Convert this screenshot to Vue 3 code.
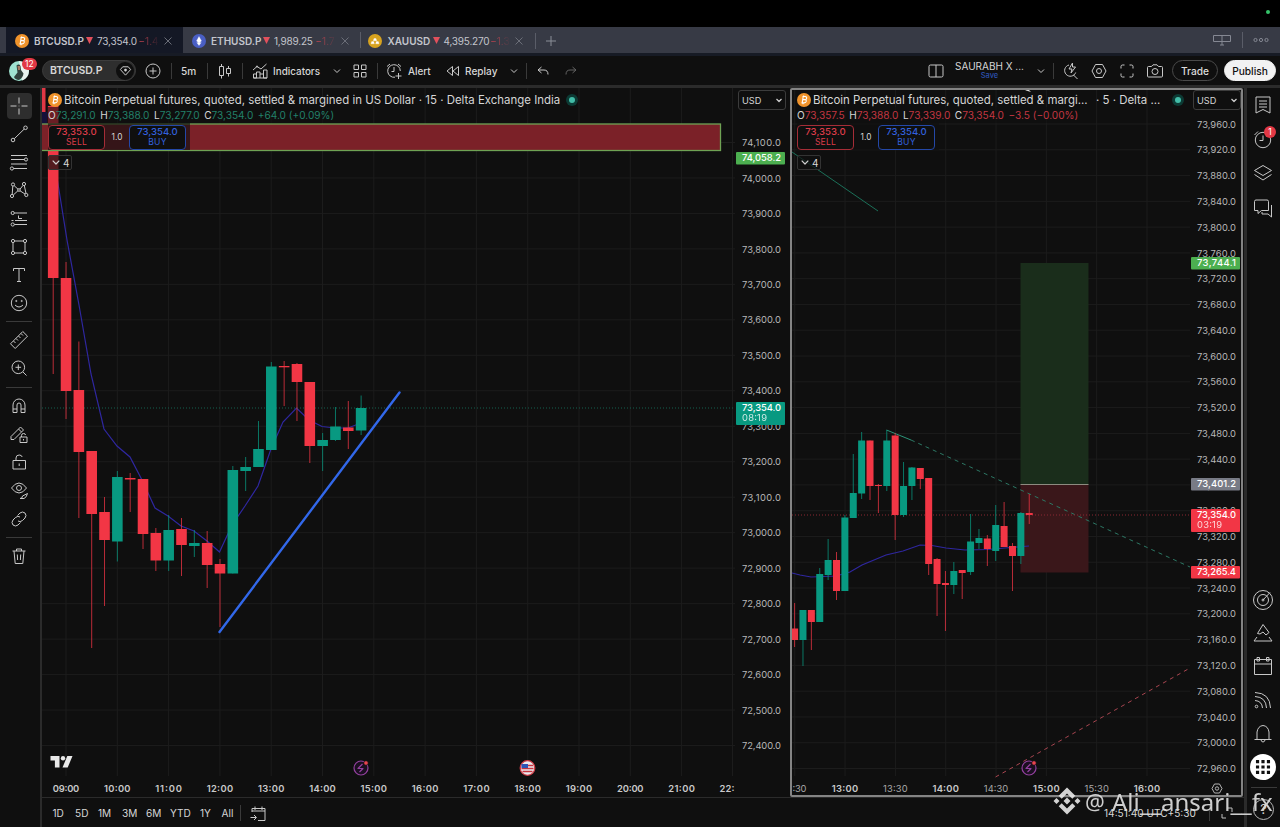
<template>
  <div class="app">
    <div class="menubar"><i class="camera-dot"></i></div>

    <nav class="tabs">
      <div v-for="t in tabs" :key="t.name" class="tab" :class="t.cls">
        <CoinIcon :kind="t.cls" />
        <b>{{ t.name }}</b>
        <svg class="tri" viewBox="0 0 7 7"><path d="M0 0h7L3.5 7z" /></svg>
        <span class="tab-price">{{ t.price }}</span>
        <span class="tab-change">{{ t.change }}</span>
        <svg class="close" viewBox="0 0 8 8"><path d="M.5 .5l7 7M7.5 .5l-7 7" /></svg>
      </div>
      <svg class="new-tab" viewBox="0 0 10 10"><path d="M5 0v10M0 5h10" /></svg>
      <div class="window-tools">
        <svg width="18" height="12" viewBox="0 0 18 12"><path d="M.5 1.5h17v6H.5zM9 1.5v9.5M7 11h4" /></svg>
        <i></i>
        <svg width="16" height="6" viewBox="0 0 16 6"><path :d="c(2.5, 3, 1.6) + c(8, 3, 1.6) + c(13.5, 3, 1.6)" /></svg>
      </div>
    </nav>

    <header class="toolbar">
      <div class="avatar">
        <svg viewBox="0 0 22 22">
          <circle cx="11" cy="11" r="10" fill="#9fe3d0" />
          <path d="M11 1a10 10 0 0 1 3 19.5L12 8z" fill="#e8f4ef" />
          <path d="M8.500 5.500q2.500-2 4 .5l.5 4 2.500 3.500q-.5 4-4.500 6.500-4-.5-5-3l3.500-4.500z" fill="#31423c" />
          <path d="M9.500 6h2.500v4h-2z" fill="#a87a62" />
        </svg>
        <span>12</span>
      </div>
      <div class="symbol">
        BTCUSD.P
        <i><svg viewBox="0 0 14 14"><path d="M4 3h6l2.500 3L7 12 1.500 6z" /><path d="M7 5v3M5.500 6.500h3" stroke-width="1.500" /></svg></i>
      </div>
      <Icon name="plus" class="ml6" />
      <i class="sep ml7"></i>
      <span class="txt interval">5m</span>
      <i class="sep ml9"></i>
      <Icon name="candles" class="ml6" />
      <i class="sep ml6"></i>
      <Icon name="indicators" class="ml6" />
      <span class="txt indicators">Indicators</span>
      <Icon name="chev" class="chev ml5" />
      <Icon name="grid" class="ml1" />
      <i class="sep ml6"></i>
      <Icon name="alert" class="ml5" />
      <span class="txt alert">Alert</span>
      <Icon name="replay" class="ml11" />
      <span class="txt replay">Replay</span>
      <Icon name="chev" class="chev ml5" />
      <i class="sep ml1"></i>
      <Icon name="undo" class="ml5" />
      <Icon name="redo" class="ml6 dim" />

      <div class="toolbar-right">
        <Icon name="layout" />
        <div class="layout-name">
          <span>SAURABH X ...</span>
          <small>Save</small>
        </div>
        <Icon name="chev" class="chev ml5" />
        <i class="sep ml1"></i>
        <Icon name="quick" class="ml6" />
        <Icon name="settings" class="ml6" />
        <Icon name="full" class="ml6" />
        <Icon name="camera" class="ml6" />
        <button class="trade">Trade</button>
        <button class="publish">Publish</button>
      </div>
    </header>

    <div class="body">
      <aside class="tools">
        <template v-for="(name, i) in drawTools" :key="i">
          <hr v-if="name === '-'" />
          <div v-else class="tool" :class="{ active: name === 'cross' }"><Icon :name="name" /></div>
        </template>
      </aside>

      <main>
        <div class="charts">
          <section v-for="p in panes" :key="p.id" class="pane" :class="p.id">
            <svg class="canvas" :viewBox="p.box">
              <g class="gridlines">
                <line v-for="l in p.prices" :key="l.text" :x1="p.x0" :x2="p.x1" :y1="l.y" :y2="l.y" />
                <line v-for="l in p.times" :key="l.text" :x1="l.x" :x2="l.x" y1="88" y2="776" />
              </g>

              <g v-if="p.id === 'left'">
                <rect x="42" y="88" width="3.500" height="24" fill="#e03745" />
                <rect x="42" y="112" width="5" height="12" fill="#15103a" />
              </g>
              <g v-else>
                <rect x="1020.500" y="263" width="68" height="221.500" fill="#1a2d1b" />
                <rect x="1020.500" y="484.500" width="68" height="88" fill="#3a171a" />
                <line x1="1020.500" x2="1088.500" y1="484.500" y2="484.500" stroke="#8d8b80" />
                <path d="M792 152l86 59" stroke="#1c7059" />
                <path d="M886.500 430l24.500 10" stroke="#2b9479" />
                <path d="M911 440l279 127" stroke="#2c7764" stroke-dasharray="4 4" />
                <path d="M995.500 777L1190 668" stroke="#a84550" stroke-dasharray="4 4" />
              </g>

              <polyline class="ma" :points="p.ma" />
              <line :x1="p.x0" :x2="p.x1" :y1="p.lastY" :y2="p.lastY" :stroke="p.lastColor" stroke-dasharray="1 2" />

              <g v-for="(k, i) in p.candles" :key="i" :fill="k[4] ? '#089981' : '#f23645'">
                <rect :x="p.first + i * p.step - 0.5" :y="k[0]" width="1" :height="k[3] - k[0]" opacity=".75" />
                <rect :x="p.first + i * p.step - p.body / 2" :y="k[1]" :width="p.body" :height="k[2] - k[1]" />
              </g>

              <g v-if="p.id === 'left'">
                <rect x="40" y="124" width="680.500" height="26.500" fill="#7b2128" stroke="#6fa254" stroke-width="1.300" />
                <path class="trend" d="M219.500 632L399.500 392.500" />
                <g fill="#e8e8e8">
                  <path d="M50.500 756h9v11.500h-4.600v-7h-4.400zM67.300 756h5.200l-4.800 11.500h-5.200z" />
                  <circle cx="63" cy="758.300" r="2.200" />
                </g>
                <g>
                  <circle cx="527.500" cy="768" r="7.300" fill="#e9e9ee" stroke="#cf3a44" stroke-width="1.300" />
                  <path d="M522 765.500h11M521.500 768.500h12M522.500 771.500h10" stroke="#c6343f" stroke-width="1.300" />
                  <path d="M521.500 764h6.500v4h-6.500z" fill="#2c55b5" />
                </g>
              </g>

              <g class="event" :transform="`translate(${p.eventX} 768)`">
                <circle r="7" />
                <path d="M1.500-4l-4.500 4.500h5L-1.500 4" />
                <circle cx="5" cy="-5" r="2.300" class="event-dot" />
              </g>

              <text v-for="l in p.prices" :key="l.text" class="price" :x="p.labelX" :y="l.y + 3.6" textLength="39">{{ l.text }}</text>
              <g v-for="t in p.tags" :key="t.text">
                <rect :x="p.labelX - 6" :y="t.y" width="49" :height="t.sub ? 23 : 12.5" rx="1" :fill="t.fill" />
                <text class="price tag" :x="p.labelX" :y="t.y + 9.3" textLength="39">{{ t.text }}</text>
                <text v-if="t.sub" class="price tag sub" :x="p.labelX" :y="t.y + 19.4" textLength="25">{{ t.sub }}</text>
              </g>
              <text
                v-for="l in p.times"
                :key="l.text"
                class="time"
                :class="{ minor: l.minor }"
                :x="l.tx || l.x"
                y="791.500"
                :textLength="l.w || 26.5"
              >{{ l.text }}</text>
              <path
                v-if="p.id === 'right'"
                :d="'M1214.500 784h5l2.500 4.500-2.500 4.500h-5l-2.500-4.500z' + c(1217, 788.5, 1.7)"
                stroke="#b5b5b5"
                fill="none"
              />
              <path v-if="p.id === 'right'" d="M1022 88l5 0 4 4-5-1.500z" fill="#ddd" />
            </svg>

            <div class="legend">
              <div class="title">
                <CoinIcon kind="btc" />
                <span class="name">{{ p.title }}</span>
                <span v-if="p.suffix" class="suffix">{{ p.suffix }}</span>
                <i class="status"></i>
              </div>
              <div class="ohlc">
                <span v-for="o in p.ohlc" :key="o[0]">{{ o[0] }}<em>{{ o[1] }}</em></span>
                <em>{{ p.change }}</em>
              </div>
              <div class="orders">
                <div class="order sell"><span>73,353.0</span><small>SELL</small></div>
                <span class="qty">1.0</span>
                <div class="order buy"><span>73,354.0</span><small>BUY</small></div>
              </div>
              <div class="collapse">
                <svg viewBox="0 0 8 5"><path d="M.7 .7L4 4 7.300 .7" /></svg>4
              </div>
            </div>
            <div class="currency">USD <svg viewBox="0 0 8 5"><path d="M1.500 1L4 3.500 6.500 1" /></svg></div>
          </section>
        </div>

        <footer>
          <span v-for="r in ranges" :key="r[0]" :style="{ width: r[1] + 'px' }">{{ r[0] }}</span>
          <i class="sep"></i>
          <Icon name="goto" class="ml6" />
          <span class="clock">14:51:40 UTC+5:30</span>
          <i class="sep"></i>
          <svg class="corner" viewBox="0 0 12 12"><path d="M1 7v4h4M7 1h4v4" /></svg>
        </footer>
      </main>

      <aside class="widgets">
        <div v-for="w in widgetsTop" :key="w" class="widget">
          <Icon :name="w" />
          <span v-if="w === 'clock'" class="count">1</span>
        </div>
        <div class="widgets-bottom">
          <div v-for="w in widgetsBottom" :key="w" class="widget" :class="w"><Icon :name="w" /></div>
          <hr />
          <div class="help">?</div>
        </div>
      </aside>
    </div>

    <div class="watermark">
      <svg viewBox="0 0 28 28">
        <path d="M14 .5l8.300 8.300-3 3L14 6.500l-5.300 5.300-3-3zM3.500 11l3 3-3 3-3-3zM24.500 11l3 3-3 3-3-3zM14 10.500l3.500 3.500-3.500 3.500-3.500-3.500zM5.700 19.200l3-3 5.300 5.300 5.300-5.300 3 3L14 27.500z" />
      </svg>
      <span class="at">@</span>
      <span>Ali__ansari__fx</span>
    </div>
  </div>
</template>

<script setup>
import { h } from "vue";

// circle as a path, so every icon can be a single d string
const c = (x, y, r) => `M${x - r} ${y}a${r} ${r} 0 1 0 ${2 * r} 0a${r} ${r} 0 1 0 ${-2 * r} 0`;

const icons = {
  plus: c(11, 11, 7) + "M11 7.5v7M7.5 11h7",
  candles: "M5.500 6.500h4v9h-4zM7.500 4v2.500M7.500 15.500v3M12.500 8.500h4v5h-4zM14.500 6v2.500M14.500 13.500v3",
  indicators: "M4.500 18v-4h3v4zM7.500 18v-6h3.500v6M11 14h3.500v4M14.500 18v-8H18v8zM4.500 18H18M4 10l4-3.500 4 2.500 5.500-5" + c(8, 6.5, 0.6),
  chev: "M8 9.500l3 3 3-3",
  grid: "M5 5h4.500v4.500H5zM12.500 5H17v4.500h-4.500zM5 12.500h4.500V17H5zM12.500 12.500H17V17h-4.500z",
  alert: "M12 17.200A6.300 6.300 0 1 1 17.300 11M11 7v4.500H8.500M4 6.500L7 4M15 4l3 2.500M15.500 13v6M12.500 16h6",
  replay: "M10.500 6.500v9L5 11zM16.500 6.500v9L11 11z",
  undo: "M9.500 7L6 10l3.500 3M6 10h6q4 0 4 4.500",
  redo: "M12.500 7L16 10l-3.500 3M16 10h-6q-4 0-4 4.500",
  layout: "M5.500 5h11q1.500 0 1.500 1.500v9q0 1.500-1.500 1.500h-11q-1.500 0-1.500-1.500v-9q0-1.500 1.500-1.500zM11 5v12",
  quick: "M9 5A5.700 5.700 0 1 0 15.700 12.500M13.500 15l4 4M12.500 3l-3.500 6h3l-1 4 4.500-6h-3z",
  settings: "M7.500 4.500h7L18 11l-3.500 6.500h-7L4 11z" + c(11, 11, 2.5),
  full: "M5 8.500V6.500Q5 5 6.500 5h2M13.500 5h2Q17 5 17 6.500v2M17 13.500v2q0 1.500-1.500 1.500h-2M8.500 17h-2Q5 17 5 15.500v-2",
  camera: "M3.500 7.500q0-1 1-1h3L9 4.800h4l1.500 1.700h3q1 0 1 1v8.500q0 1-1 1h-13q-1 0-1-1z" + c(11, 11.5, 3),
  cross: "M11 2.500v6M11 13.500v6M2.500 11h6M13.500 11h6M11 10.700v.6",
  trend: c(5, 17, 1.8) + c(17.5, 4.8, 1.8) + "M6.300 15.700L16.200 6.100",
  fib: "M3 4.500h16M3 8.500h13.500M3 13h16M5.500 17.500H19" + c(18, 8.5, 1.6) + c(3.9, 17.5, 1.6),
  pattern: c(5, 5.5, 1.6) + c(16, 5, 1.6) + c(4, 17, 1.6) + c(18.3, 16, 1.6) + c(11, 11, 1.3) + "M4.800 7.100L4.200 15.400M6.200 6.700L10 10.200M12 10.200L15 6.400M16.300 6.600L18 14.400M5.300 16L10 11.700M12 11.800L17 15",
  position: c(4.7, 6, 1.6) + c(4.7, 17.5, 1.6) + "M6.300 6H19M6.300 17.500H19M3.500 13.500h2M7 13.500h12M10.500 8.500v3h3.500",
  rect: c(5, 5, 1.6) + c(17, 5, 1.6) + c(5, 17, 1.6) + c(17, 17, 1.6) + "M6.600 5h8.800M6.600 17h8.800M5 6.600v8.800M17 6.600v8.800",
  text: "M5.500 7V4.500h11V7M11 4.500v13M9 17.500h4",
  smile: c(11, 11, 7.7) + c(8.3, 9, 0.6) + c(13.7, 9, 0.6) + "M7 13q4 4 8 0",
  ruler: "M2.500 14.800L14.800 2.500l4.700 4.700L7.200 19.500zM5.500 12l2 2M8 9.500l2 2M10.500 7l2 2M13 4.500l2 2",
  zoom: c(10.3, 10.3, 6.3) + "M10.300 7.500v5.600M7.500 10.300h5.600M15 15l3.500 3.500",
  magnet: "M5 17.500V10a6 6 0 0 1 12 0v7.500h-4V10a2 2 0 0 0-4 0v7.500zM5 14h4M13 14h4",
  pencil: "M3 13.500L12.500 4l3 3L6 16.500H3zM10.500 6l3 3M12 14h7v5.500h-7zM13.500 14v-1.500q0-2 2-2t2 1.500M15.500 16v1.500",
  lock: "M5 9.500h12.500v8.500H5zM8 9.500V7q0-3 3.200-3 2.500 0 3 2M11.200 12.500v2.500",
  eye: "M3.500 9q3.500-5 7.500-5t7.500 5q-3.500 5-7.500 5t-7.500-5z" + c(11, 9, 2.5) + "M12 19.500q2.500 0 2.500-2.500l5-2.500q-1 4-3.500 5z",
  link: "M9.500 7.500l2.500-2.500q2.500-2 5 .0 2 2.500 0 5l-2.500 2.500q-2.500 2-4.500.5M12.500 14.500L10 17q-2.500 2-5 0-2-2.500 0-5l2.500-2.500q2.500-2 4.500-.5",
  trash: "M4.500 6h13M8.500 6V4h5v2M6 6l1.200 12.500h7.600L16 6M9.300 9.500l.3 5.500M12.700 9.500l-.3 5.500",
  list: "M4 3h14v16l-7-3.500L4 19zM7 7h8M7 10h8M7 13h8",
  clock: c(11, 12, 7.7) + "M11 7.500V12.500H7.500M2.500 7L6 3.500",
  layers: "M11 3.500l8.500 5-8.500 5-8.500-5zM2.500 12.500l8.500 5.500 8.500-5.500",
  chat: "M4 3h11q1.500 0 1.500 1.500v9h-7l-3.500 3v-3H2.500v-9Q2.500 3 4 3zM19.500 8v12l-3.500-3h-6v-2",
  radar: c(11, 11, 9.5) + c(11, 11, 5.5) + c(11, 11, 1) + "M11 11l7-7.500",
  ideas: "M11 2.500l6 8-3 2.500-3-3-3 2L5.500 11.500zM5 15l-3 4h18l-3-4",
  calendar: "M2.500 4.500h17v15h-17zM2.500 9h17M5 2.500h2.500V6H5zM14.500 2.500H17V6h-2.500z",
  feed: c(4.5, 17.5, 1.3) + "M3 11.500q7 .5 7.500 7.500M3 7.500q11 .5 11.500 11.500M3 3.500q15 .5 15.500 15.500",
  bell: "M2.500 17.500h17M5 17.500V10q1-6 6-6.500 5 .5 6 6.500v7.500M9 18q.5 2 2 2t2-2",
  apps: [5, 11, 17].map((x) => [5, 11, 17].map((y) => `M${x - 1} ${y - 1}h2v2h-2z`).join("")).join(""),
  goto: "M5 10V6.500h13V18.500h-7M5 9h13M8 4.500v3.500M15 4.500v3.500M3.500 15.500H9M7 13l2.500 2.500L7 18",
};

const Icon = (props) => h("svg", { class: "icon", viewBox: "0 0 22 22" }, [h("path", { d: icons[props.name] })]);
Icon.props = ["name"];

const coins = {
  btc: ["#f0932b", "M5.500 3.500h2.700q1.800.3 1.400 1.800-.3 1.200-1.400 1.300 1.300.2 1.100 1.600-.3 1.700-2.100 1.700H4.500M6.200 3.700L5.200 9.800M5.800 6.600h2.300M6.600 2.500v1M6 10v1.200"],
  eth: ["#4a5fc4", "M7 2.500L4.500 7 7 8.700 9.500 7zM4.700 8.500L7 11.500l2.300-3"],
  xau: ["#d8a31f", "M5.300 6.800L6 4.500h2l.7 2.300zM3 9.800l.7-2.200h2l.6 2.200zM7.700 9.800l.6-2.200h2l.7 2.200z"],
};
const CoinIcon = (props) =>
  h("svg", { class: "coin", viewBox: "0 0 14 14", width: 14, height: 14 }, [
    h("circle", { cx: 7, cy: 7, r: 7, fill: coins[props.kind][0] }),
    h("path", { d: coins[props.kind][1], fill: props.kind === "btc" ? "none" : "#fff", stroke: "#fff", "stroke-width": props.kind === "btc" ? 1.1 : 0.3 }),
  ]);
CoinIcon.props = ["kind"];

const tabs = [
  { name: "BTCUSD.P", price: "73,354.0", change: "−1.4", cls: "btc" },
  { name: "ETHUSD.P", price: "1,989.25", change: "−1.7", cls: "eth" },
  { name: "XAUUSD", price: "4,395.270", change: "−1.3", cls: "xau" },
];

const drawTools = [
  "cross", "trend", "fib", "pattern", "position", "rect", "text", "smile", "-",
  "ruler", "zoom", "-",
  "magnet", "pencil", "lock", "eye", "link", "-",
  "trash",
];
const widgetsTop = ["list", "clock", "layers", "chat"];
const widgetsBottom = ["radar", "ideas", "calendar", "feed", "bell", "apps"];

const ranges = [["1D", 22.5], ["5D", 23], ["1M", 24], ["3M", 24], ["6M", 24], ["YTD", 30], ["1Y", 21.5], ["All", 18.5]];

const fmt = (n) => n.toLocaleString("en-US", { minimumFractionDigits: 1 });

function priceScale(from, step, count, y0, dy) {
  return Array.from({ length: count }, (_, i) => ({ text: fmt(from - i * step), y: y0 + i * dy }));
}

const leftTimes = Array.from({ length: 13 }, (_, i) => ({
  text: String(9 + i).padStart(2, "0") + ":00",
  x: 66 + i * 51.3,
}));
leftTimes.push({ text: "22:", x: 732.5, tx: 727, w: 15 });

const rightTimes = [":30", "13:00", "13:30", "14:00", "14:30", "15:00", "15:30", "16:00"].map((text, i) => ({
  text,
  x: 794.7 + i * 50.33,
  tx: i ? 0 : 799.5,
  w: i ? 0 : 14,
  minor: text.endsWith("30"),
}));
rightTimes.forEach((t) => {
  if (t.minor && t.w === 0) t.w = 24.5;
});

// candles: [high, body top, body bottom, low, up]
const panes = [
  {
    id: "left",
    box: "42 88 748 710",
    x0: 42,
    x1: 735,
    labelX: 742,
    prices: priceScale(74100, 100, 18, 142.5, 35.47),
    times: leftTimes,
    first: 53.2,
    step: 12.83,
    body: 10.6,
    lastY: 408,
    lastColor: "#14604f",
    eventX: 361,
    ma: "54,160 59,190 67,240 79,305 91,374 104,429 117,446 130,457 142,480 155,508 168,516 181,526 194,531 207,541 219.5,552 232,525 245,506 258,486 271,449 283,422 296.5,408 309,420 322,426.5 335,428 348,428 361,423",
    candles: [
      [106, 106, 278, 374, 0],
      [262, 278, 391, 419, 0],
      [341.5, 390, 452, 518, 0],
      [451, 451, 514, 648, 0],
      [497, 512, 540, 606, 0],
      [471, 477, 541.5, 561.5, 1],
      [473, 478, 479.5, 512, 0],
      [479, 479, 534, 549, 0],
      [528, 533, 560.5, 571, 0],
      [515, 530, 560.5, 571, 1],
      [518, 529, 545, 576, 0],
      [530, 543, 546, 557, 1],
      [531, 543, 565, 588, 0],
      [559, 564, 573.5, 627, 0],
      [466, 470, 573.5, 573.5, 1],
      [457, 467, 471, 491, 1],
      [421, 449, 467, 467, 1],
      [362, 366.5, 450, 450, 1],
      [361, 366, 367.3, 406, 0],
      [363, 364, 382, 421, 0],
      [382, 382, 446, 463, 0],
      [433, 440, 446, 471, 1],
      [407, 426.5, 440, 441, 1],
      [401, 427.5, 431, 449, 0],
      [395.5, 408, 430.5, 435, 1],
    ],
    tags: [
      { text: "74,058.2", y: 152, fill: "#4caf50" },
      { text: "73,354.0", sub: "08:19", y: 402, fill: "#089981" },
    ],
    title: "Bitcoin Perpetual futures, quoted, settled & margined in US Dollar · 15 · Delta Exchange India",
    ohlc: [["O", "73,291.0"], ["H", "73,388.0"], ["L", "73,277.0"], ["C", "73,354.0"]],
    change: "+64.0 (+0.09%)",
  },
  {
    id: "right",
    box: "792 90 449 705",
    x0: 792,
    x1: 1190,
    labelX: 1197,
    prices: priceScale(73960, 40, 26, 124, 25.78),
    times: rightTimes,
    first: 794.6,
    step: 8.38,
    body: 7,
    lastY: 515,
    lastColor: "#8a2832",
    eventX: 1029,
    ma: "792,573 800,575 811,577 836,576 850,572 862,565 886,555 903,551 920,545 932,545.5 946,548 965,550 987,549.5 1005,548 1029,546",
    candles: [
      [603, 628.5, 640, 647, 0],
      [610, 610, 640, 666, 1],
      [610, 610, 622, 650, 0],
      [568, 574, 622, 622, 1],
      [539, 560, 575, 580, 1],
      [552, 560, 591, 600, 0],
      [515, 517.5, 591, 591, 1],
      [454, 493, 518, 518, 1],
      [432, 440.5, 493.5, 499, 1],
      [440.5, 440.5, 486, 500, 0],
      [484, 485, 486, 513, 0],
      [430, 440.5, 486, 491, 1],
      [433, 435.5, 515, 540, 0],
      [462, 486, 515, 517, 1],
      [467, 467.5, 486, 500, 1],
      [468, 468, 479, 489, 0],
      [478, 478, 564, 575, 0],
      [558, 559, 584, 616, 0],
      [571, 583, 585, 631, 0],
      [562, 571, 585, 594, 1],
      [570, 570, 573, 599, 0],
      [514, 541.5, 572, 575, 1],
      [529, 538, 543, 549, 1],
      [535, 538.5, 549, 566, 0],
      [505, 525, 551, 561, 1],
      [502, 526, 547, 547, 0],
      [543, 546, 556, 591, 0],
      [512, 513, 556, 564, 1],
      [494, 513, 515, 524, 0],
    ],
    tags: [
      { text: "73,744.1", y: 257, fill: "#4caf50" },
      { text: "73,401.2", y: 478, fill: "#787b86" },
      { text: "73,354.0", sub: "03:19", y: 509, fill: "#f23645" },
      { text: "73,265.4", y: 566, fill: "#f23645" },
    ],
    title: "Bitcoin Perpetual futures, quoted, settled & margi...",
    suffix: "· 5 · Delta ...",
    ohlc: [["O", "73,357.5"], ["H", "73,388.0"], ["L", "73,339.0"], ["C", "73,354.0"]],
    change: "−3.5 (−0.00%)",
  },
];
</script>

<style>
body {
  background: #0f0f0f;
  overflow: hidden;
}
</style>

<style scoped>
.app {
  position: relative;
  width: 1280px;
  height: 827px;
  overflow: hidden;
  background: #0f0f0f;
  color: #d6d6d6;
  font-family: Inter, "Liberation Sans", sans-serif;
  font-size: 10.5px;
  white-space: nowrap;
}

.app * {
  box-sizing: border-box;
}

svg {
  flex: none;
}

svg path {
  stroke-linejoin: round;
}

em,
i {
  font-style: normal;
}

.menubar {
  display: flex;
  justify-content: flex-end;
  height: 27px;
  padding: 10px 10px 0 0;
  background: #000;
}

.camera-dot {
  width: 4px;
  height: 4px;
  border-radius: 50%;
  background: #35c46a;
}

/* window tabs */
.tabs {
  display: flex;
  align-items: center;
  height: 29px;
  padding-left: 6px;
  border-bottom: 3px solid #171b25;
  background: #373a45;
}

.tab {
  position: relative;
  display: flex;
  align-items: center;
  width: 177px;
  height: 26px;
  padding: 1px 0 0 8.5px;
  color: #c3c5cc;
  font-size: 10px;
}

.tab.btc {
  background: #141825;
}

.tab.xau {
  width: 176px;
  border-left: 1px solid #5a5d68;
  border-image: linear-gradient(transparent 20%, #5a5d68 20%, #5a5d68 80%, transparent 80%) 1;
  padding-left: 7px;
}

.tab b {
  width: 49px;
  margin-left: 5.5px;
  font-weight: 600;
}

.tab.xau b {
  width: 42px;
}

.tri {
  width: 7px;
  height: 7px;
  margin: 0 4px 0 3px;
  fill: #e2505c;
}

.tab-price {
  width: 41.5px;
  letter-spacing: -0.2px;
}

.tab.xau .tab-price {
  width: 47px;
}

.tab-change {
  width: 21px;
  background: linear-gradient(90deg, #c24450, transparent);
  background-clip: text;
  color: transparent;
}

.close {
  width: 8px;
  height: 8px;
  margin-left: 4px;
  fill: none;
  stroke: #6b6e78;
}

.new-tab {
  width: 10px;
  height: 10px;
  margin: 1px 0 0 10px;
  fill: none;
  stroke: #8b8e98;
}

.tab.xau::after {
  content: "";
  width: 1px;
  height: 16px;
  margin-left: 12px;
  background: #5a5d68;
}

.window-tools {
  display: flex;
  align-items: center;
  margin-left: auto;
  padding-right: 11px;
  fill: none;
  stroke: #858893;
}

.window-tools i {
  width: 1px;
  height: 16px;
  margin: 0 10px 0 11px;
  background: #5a5d68;
}

/* main toolbar */
.toolbar {
  display: flex;
  align-items: center;
  height: 32px;
  padding: 0 4px 0 8px;
  border-bottom: 3px solid #2b2b2b;
  font-size: 10.3px;
}

.icon {
  width: 22px;
  height: 22px;
  fill: none;
  stroke: #c8c8c8;
  stroke-width: 1;
}

.dim {
  opacity: 0.45;
}

.sep {
  flex: none;
  width: 1px;
  height: 16px;
  background: #3a3a3a;
}

.ml1 { margin-left: 1px; }
.ml5 { margin-left: 5px; }
.ml6 { margin-left: 6px; }
.ml7 { margin-left: 7px; }
.ml9 { margin-left: 9px; }
.ml11 { margin-left: 11px; }

.avatar {
  position: relative;
  width: 22px;
  height: 22px;
}

.avatar span {
  position: absolute;
  left: 14px;
  top: -2px;
  padding: 0 3px;
  border-radius: 7px;
  background: #e23845;
  color: #fff;
  font-size: 8.5px;
  line-height: 12px;
}

.symbol {
  display: flex;
  align-items: center;
  justify-content: space-between;
  width: 94px;
  height: 21px;
  margin-left: 12px;
  padding: 0 1px 0 7px;
  border: 1px solid #3d3d3d;
  border-radius: 11px;
  background: #2e2e2e;
  font-size: 10.5px;
  font-weight: 600;
}

.symbol i {
  display: flex;
  align-items: center;
  justify-content: center;
  width: 18px;
  height: 18px;
  border-radius: 50%;
  background: #0f0f0f;
}

.symbol svg {
  width: 13px;
  fill: none;
  stroke: #d6d6d6;
}

.txt {
  font-weight: 500;
  font-size: 10.1px;
}

.interval { width: 17px; margin-left: 9px; }
.indicators { width: 48px; margin-left: 2px; font-size: 9.9px; }
.alert { width: 23px; margin-left: 3px; font-size: 9.9px; }
.replay { width: 33px; margin-left: 1px; }

.toolbar-right {
  display: flex;
  align-items: center;
  margin-left: auto;
}

.layout-name {
  display: flex;
  flex-direction: column;
  align-items: center;
  width: 71px;
  margin: -1px 0 0 7px;
  font-size: 10px;
  line-height: 11px;
}

.layout-name small {
  color: #2c4fae;
  font-size: 7.5px;
  font-weight: 500;
  line-height: 8px;
}

button {
  height: 21px;
  margin-left: 6px;
  padding: 0;
  border: 1px solid #4a4a4a;
  border-radius: 11px;
  background: none;
  color: #dcdcdc;
  font: 500 10.2px Inter, sans-serif;
}

.trade {
  width: 46px;
}

.publish {
  width: 52px;
  border-color: #f2f2f2;
  background: #f2f2f2;
  color: #0f0f0f;
}

/* columns */
.body {
  display: flex;
  height: 739px;
}

.tools {
  width: 42px;
  padding-top: 4px;
  border-right: 2px solid #2b2b2b;
}

.tool {
  display: flex;
  align-items: center;
  justify-content: center;
  width: 25px;
  height: 28.1px;
  margin-left: 6.5px;
}

.tool.active {
  height: 26px;
  margin: 1px 0 1.1px 6.5px;
  border-radius: 4px;
  background: #2e2e2e;
}

.tools hr {
  width: 26px;
  height: 1px;
  margin: 4.3px 0 4.3px 6px;
  border: 0;
  background: #3a3a3a;
}

main {
  width: 1202px;
}

.charts {
  display: flex;
  height: 710px;
  border-bottom: 1px solid #2b2b2b;
}

.pane {
  position: relative;
  width: 748px;
  height: 710px;
}

.pane.right {
  width: 453px;
  height: 709px;
  border: 2px solid #848484;
  border-radius: 2px;
}

.canvas {
  display: block;
  width: 100%;
  height: 100%;
}

.gridlines {
  stroke: #1c1c1c;
}

.ma {
  fill: none;
  stroke: #2f27a0;
  stroke-width: 1.2;
}

.trend {
  stroke: #3268ea;
  stroke-width: 2.4;
  stroke-linecap: round;
}

.event {
  fill: #1b0f20;
  stroke: #93409f;
  stroke-width: 1.2;
}

.event-dot {
  fill: #ea4450;
  stroke: #0f0f0f;
  stroke-width: 0.8;
}

.price {
  fill: #b8b8b8;
  font-size: 9.4px;
}

.tag {
  fill: #fff;
  font-weight: 500;
}

.sub {
  font-weight: 400;
  opacity: 0.8;
}

.time {
  fill: #cacaca;
  font-size: 9.4px;
  font-weight: 600;
  text-anchor: middle;
}

.minor {
  fill: #a8a8a8;
  font-weight: 400;
}

/* chart legend */
.legend {
  position: absolute;
  left: 6px;
  top: 4px;
}

.right .legend {
  left: 5px;
  top: 2px;
}

.title {
  display: flex;
  align-items: center;
  height: 15px;
  font-size: 11.44px;
}

.coin {
  margin-right: 2px;
}

.tab .coin {
  margin-right: 0;
}

.name {
  width: 496px;
}

.right .name {
  width: 275px;
}

.suffix {
  margin-left: 8px;
  width: 63px;
}

.status {
  width: 6px;
  height: 6px;
  margin-left: 9px;
  border-radius: 50%;
  background: #42bda8;
  box-shadow: 0 0 0 3px #0c3a34;
}

.right .status {
  margin-left: 16px;
}

.ohlc {
  display: flex;
  gap: 4.5px;
  width: fit-content;
  height: 16px;
  background: rgba(15, 15, 15, 0.6);
  font-size: 10.1px;
  line-height: 17px;
}

.ohlc em {
  color: #22806a;
}

.right .ohlc em {
  color: #c23642;
}

.orders {
  display: flex;
  align-items: center;
  width: 142px;
  height: 27px;
  padding-top: 1px;
  background: rgba(15, 15, 15, 0.65);
}

.order {
  display: flex;
  flex-direction: column;
  align-items: center;
  justify-content: center;
  width: 57px;
  height: 25px;
  border: 1px solid #a52d37;
  border-radius: 4px;
  background: #0f0f0f;
  color: #dd3c49;
  font-size: 9.6px;
  font-weight: 500;
  line-height: 10px;
}

.order small {
  font-size: 8.6px;
  font-weight: 400;
  letter-spacing: 0.2px;
}

.order.buy {
  border-color: #2448a8;
  color: #3260de;
}

.qty {
  width: 24px;
  font-size: 8.3px;
  text-align: center;
}

.collapse {
  display: flex;
  align-items: center;
  gap: 3px;
  width: 24px;
  height: 15px;
  margin-top: 5px;
  padding-left: 3px;
  border: 1px solid #333;
  border-radius: 2px;
  background: rgba(15, 15, 15, 0.7);
  font-size: 10px;
}

.collapse svg,
.currency svg {
  width: 8px;
  fill: none;
  stroke: #d0d0d0;
  stroke-width: 1.2;
}

.currency {
  position: absolute;
  right: 4px;
  top: 2px;
  display: flex;
  align-items: center;
  justify-content: space-between;
  width: 48px;
  height: 20px;
  padding: 0 2px 0 3px;
  border: 1px solid #3c3c3c;
  border-radius: 3px;
  background: #0f0f0f;
  font-size: 9.2px;
}

.right .currency {
  right: 0;
  top: 0;
}

/* bottom bar */
footer {
  display: flex;
  align-items: center;
  height: 29px;
  padding-left: 10.5px;
  font-size: 10.1px;
}

footer > span {
  flex: none;
}

.clock {
  width: 97px;
  margin-left: 835px;
}

footer .clock + .sep {
  margin-left: 8px;
}

.corner {
  width: 12px;
  margin-left: 11px;
  fill: none;
  stroke: #c0c0c0;
}

/* right sidebar */
.widgets {
  display: flex;
  flex-direction: column;
  width: 36px;
  border-left: 3px solid #2b2b2b;
}

.widget {
  position: relative;
  display: flex;
  align-items: center;
  justify-content: center;
  height: 34.2px;
  padding-right: 1px;
}

.count {
  position: absolute;
  left: 17px;
  top: 4px;
  width: 12px;
  height: 12px;
  border-radius: 50%;
  background: #e23845;
  color: #fff;
  font-size: 8.5px;
  line-height: 12px;
  text-align: center;
}

.widgets-bottom {
  height: 244px;
  margin-top: auto;
}

.widgets-bottom .widget {
  height: 33.4px;
}

.widget.apps .icon {
  width: 26px;
  height: 26px;
  padding: 3px;
  border-radius: 50%;
  background: #fff;
  fill: #0f0f0f;
  stroke: #0f0f0f;
  stroke-width: 1.5;
}

.widgets-bottom hr {
  width: 26px;
  height: 1px;
  margin: 4px auto 0;
  border: 0;
  background: #3a3a3a;
}

.help {
  width: 21px;
  height: 21px;
  margin: 11px 0 0 6px;
  border: 1px solid #b5b5b5;
  border-radius: 50%;
  font-size: 13px;
  line-height: 19px;
  text-align: center;
}

.watermark {
  position: absolute;
  left: 1053px;
  top: 784px;
  display: flex;
  align-items: center;
  height: 34px;
  color: #dedede;
  font-family: "Noto Sans", sans-serif;
  font-size: 24px;
  opacity: 0.92;
}

.watermark svg {
  width: 28px;
  height: 28px;
  fill: #e4e4e4;
}

.at {
  width: 27px;
  margin-left: 4px;
  font-size: 22px;
}
</style>
